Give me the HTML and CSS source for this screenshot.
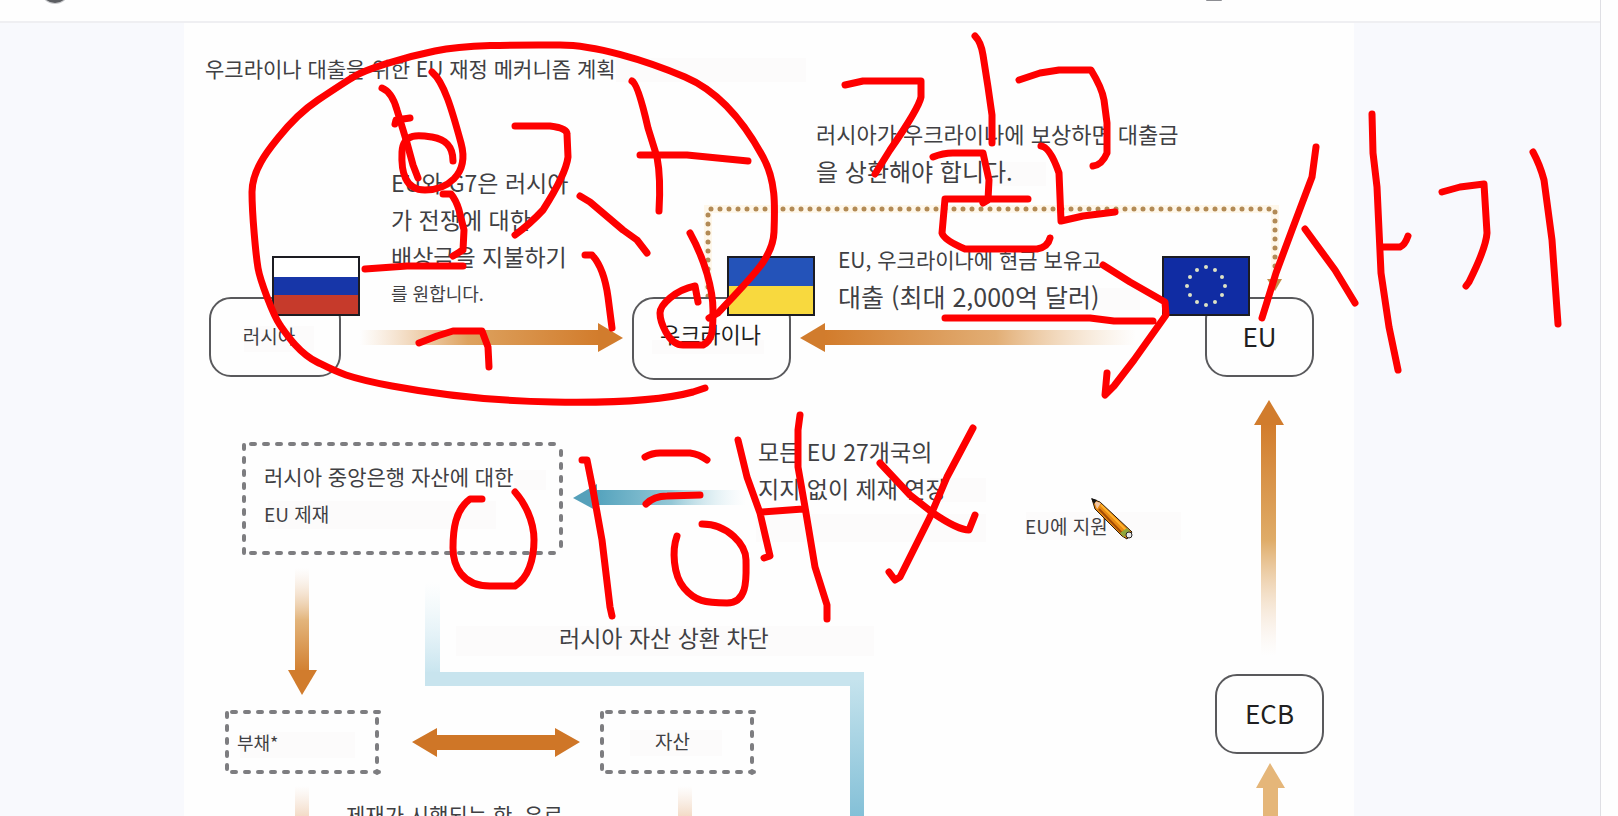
FILE: index.html
```html
<!DOCTYPE html>
<html lang="ko">
<head>
<meta charset="utf-8">
<title>우크라이나 대출을 위한 EU 재정 메커니즘 계획</title>
<link rel="stylesheet" href="styles.css">
</head>
<body>
<div class="viewer">
  <header class="topbar">
    <svg class="topbar-marks" width="1600" height="21" aria-hidden="true">
      <circle cx="55" cy="-11" r="15" fill="#c9cacd"/>
      <circle cx="55" cy="-11" r="14" fill="#5c5e62"/>
      <rect x="1206" y="-4" width="16" height="5" rx="1" fill="#8d8e93"/>
    </svg>
  </header>
  <main class="pane">
    <article class="sheet">
      <svg class="layer" width="1170" height="794" viewBox="184 22 1170 794" aria-hidden="true">
        <defs>
          <linearGradient id="right" gradientUnits="userSpaceOnUse" x1="360" y1="0" x2="600" y2="0"><stop offset="0" stop-color="#e8b783" stop-opacity="0"/><stop offset=".45" stop-color="#dda25f"/><stop offset="1" stop-color="#d27c2c"/></linearGradient>
          <linearGradient id="left" gradientUnits="userSpaceOnUse" x1="825" y1="0" x2="1136" y2="0"><stop offset="0" stop-color="#d27c2c"/><stop offset=".55" stop-color="#e2ae75"/><stop offset="1" stop-color="#f0cfa9" stop-opacity="0"/></linearGradient>
          <linearGradient id="up" gradientUnits="userSpaceOnUse" x1="0" y1="424" x2="0" y2="656"><stop offset="0" stop-color="#d27c2c"/><stop offset=".5" stop-color="#dfac68"/><stop offset="1" stop-color="#f5e0d0" stop-opacity="0"/></linearGradient>
          <linearGradient id="down" gradientUnits="userSpaceOnUse" x1="0" y1="568" x2="0" y2="672"><stop offset="0" stop-color="#f3dcca" stop-opacity="0"/><stop offset=".5" stop-color="#e3b57c"/><stop offset="1" stop-color="#d27f2f"/></linearGradient>
          <linearGradient id="faint" gradientUnits="userSpaceOnUse" x1="0" y1="786" x2="0" y2="824"><stop offset="0" stop-color="#f3dcca" stop-opacity="0"/><stop offset="1" stop-color="#f0d0b4"/></linearGradient>
          <linearGradient id="cyan" gradientUnits="userSpaceOnUse" x1="597" y1="0" x2="746" y2="0"><stop offset="0" stop-color="#55a3bd"/><stop offset=".5" stop-color="#93c7d6"/><stop offset="1" stop-color="#d9edf3" stop-opacity="0"/></linearGradient>
          <linearGradient id="pipe-in" gradientUnits="userSpaceOnUse" x1="0" y1="582" x2="0" y2="672"><stop offset="0" stop-color="#dff0f7" stop-opacity="0"/><stop offset="1" stop-color="#c9e5ef"/></linearGradient>
          <linearGradient id="pipe-out" gradientUnits="userSpaceOnUse" x1="0" y1="680" x2="0" y2="816"><stop offset="0" stop-color="#c5e3ed"/><stop offset="1" stop-color="#84c0d7"/></linearGradient>
        </defs>
        <g class="tint">
          <rect x="616" y="58" width="190" height="24"/><rect x="268" y="501" width="228" height="28"/><rect x="514" y="470" width="32" height="20"/>
          <rect x="456" y="626" width="418" height="30"/><rect x="756" y="514" width="230" height="28"/><rect x="930" y="478" width="56" height="24"/>
          <rect x="1026" y="512" width="155" height="28"/><rect x="240" y="732" width="115" height="26"/><rect x="630" y="730" width="92" height="26"/>
          <rect x="990" y="162" width="56" height="24"/><rect x="1096" y="288" width="44" height="22"/><rect x="244" y="326" width="70" height="26"/><rect x="652" y="340" width="112" height="14"/>
        </g>
        <path fill="url(#right)" d="M360 330H598V345H360z"/><path class="gold" d="M598 323 623 338 598 352z"/>
        <path fill="url(#left)" d="M825 330H1136V345H825z"/><path class="gold" d="M825 323 800 338 825 352z"/>
        <path fill="url(#up)" d="M1261 424H1276V656H1261z"/><path class="gold" d="M1254 425 1269 400 1284 425z"/>
        <path fill="url(#down)" d="M295 568H309V671H295z"/><path class="gold" d="M288 670H317L302 695z"/>
        <path fill="#e5b679" d="M1263 816V788H1256L1270 763 1285 788H1278V816z"/>
        <path fill="#cf7627" d="M412 742 437 728V735H555V728L580 742 555 757V750H437V757z"/>
        <path fill="url(#faint)" d="M295 786H309V816H295zM678 786H692V816H678z"/>
        <path fill="url(#cyan)" d="M597 490H746V505H597z"/><path fill="#55a0ba" d="M573 498 597 484V511z"/>
        <path fill="url(#pipe-in)" d="M425 582H440V672H425z"/><path fill="#c8e4ee" d="M425 672H864V686H425z"/><path fill="url(#pipe-out)" d="M850 680H864V816H850z"/>
        <g class="dots-halo"><path d="M708 290V209H1275V284"/></g>
        <g class="dots"><path d="M708 296V209H1275V284"/></g>
        <path fill="#c58b45" d="M1267 279H1282L1275 291z"/>
        <g class="dashes"><path d="M251 444H562M251 553H562M244 445V554M561 451V554"/><path d="M232 712H379M232 772H379M227 713V773M377 719V773"/><path d="M607 712H754M607 772H754M602 713V773M752 719V773"/></g>
      </svg>

      <h1 class="text title">우크라이나 대출을 위한 EU 재정 메커니즘 계획</h1>

      <section class="node russia t19">러시아</section>
      <section class="node ukraine t22 strong">우크라이나</section>
      <section class="node eu t26 strong">EU</section>
      <section class="node ecb t26 strong">ECB</section>

      <div class="flag flag-ru"><i></i><i></i><i></i></div>
      <div class="flag flag-ua"><i></i><i></i></div>
      <svg class="flag flag-eu" viewBox="-42 -28 84 56" role="img" aria-label="EU">
        <g fill="#dfe3c4"><circle cx="0" cy="-19" r="2"/><circle cx="9" cy="-16" r="2"/><circle cx="16" cy="-9" r="2"/><circle cx="19" cy="0" r="2"/><circle cx="16" cy="9" r="2"/><circle cx="9" cy="16" r="2"/><circle cx="0" cy="19" r="2"/><circle cx="-9" cy="16" r="2"/><circle cx="-16" cy="9" r="2"/><circle cx="-19" cy="0" r="2"/><circle cx="-16" cy="-9" r="2"/><circle cx="-9" cy="-16" r="2"/></g>
      </svg>

      <div class="text reparation"><p class="t23">EU와 G7은 러시아</p><p class="t23">가 전쟁에 대한</p><p class="t23">배상금을 지불하기</p><p class="t18">를 원합니다.</p></div>
      <div class="text repay"><p class="t22">러시아가 우크라이나에 보상하면 대출금</p><p class="t24">을 상환해야 합니다.</p></div>
      <div class="text loan"><p class="t21">EU, 우크라이나에 현금 보유고</p><p class="t25">대출 (최대 2,000억 달러)</p></div>
      <div class="text sanction"><p class="t21">러시아 중앙은행 자산에 대한</p><p class="t19">EU 제재</p></div>
      <div class="text extend"><p class="t23">모든 EU 27개국의</p><p class="t23">지지 없이 제재 연장</p></div>
      <p class="text support t19">EU에 지원</p>
      <p class="text block-assets t23">러시아 자산 상환 차단</p>
      <p class="text debt t18">부채*</p>
      <p class="text asset t19">자산</p>
      <p class="text until t21">제재가 시행되는 한, 유로</p>
    </article>
  </main>
</div>

<svg class="ink" width="1618" height="816" viewBox="0 0 1618 816" aria-hidden="true">
  <g class="pen">
    <path d="M705 388 693 392C660 401 610 403 553 402S440 395 392 386S335 371 317 362S287 335 280 325S260 280 258 268S252 215 252 192S270 148 278 138S300 112 318 100S345 82 355 76S400 58 435 51S525 45 560 45S645 60 685 77S750 133 763 157S775 205 774 232S750 278 718 313L709 318"/>
    <path d="M382 88Q392 92 397 110L407 143 413 165 418 178M395 124 396 120 410 118"/>
    <path d="M432 72C444 82 452 110 461 143S445 190 425 190S401 172 402 152S420 135 432 137S453 145 453 161"/>
    <path d="M443 194H451Q456 200 459 210L464 230 463 250 453 256M365 269 407 266 463 266"/>
    <path d="M515 126H550Q567 128 567 134L568 157Q566 174 543 210Q530 224 515 235M580 196 590 202 623 230 637 240 647 253"/>
    <path d="M632 81Q638 84 648 128L657 157Q661 178 659 211M640 155H687L748 161"/>
    <path d="M585 255H592Q604 268 608 297L612 328"/>
    <path d="M698 302 695 286C675 290 660 305 660 313S668 345 683 345H703C713 340 713 330 713 310S705 260 690 233"/>
    <path d="M419 343 437 336 453 331H482L488 347 489 367"/>
    <path d="M845 85 863 81H921V97Q919 108 890 150L875 174M975 36Q981 42 983 55L988 87 992 115V143"/>
    <path d="M933 157Q943 153 953 153H983L989 180 988 200 983 203M1028 199H945L942 233Q944 240 965 249H1037Q1048 247 1050 238"/>
    <path d="M1019 80 1040 73 1059 70H1091Q1102 88 1104 100L1107 123V153Q1102 165 1093 166M1041 146Q1050 147 1059 173L1061 221 1083 216 1115 212"/>
    <path d="M945 318H1090L1114 321H1153M1103 265 1130 282 1165 302 1166 315 1134 360 1114 386 1105 395 1107 373"/>
    <path d="M1316 147 1312 177 1292 230 1276 273 1262 318M1305 229 1335 270 1355 303"/>
    <path d="M1372 114 1373 153 1377 187 1381 273 1389 327 1398 370M1383 247H1400Q1405 245 1408 236"/>
    <path d="M1442 192 1460 187 1484 184 1487 233Q1486 248 1469 282L1466 286M1533 152Q1540 165 1544 180L1552 240 1558 324"/>
    <path d="M482 499H470C455 510 453 530 453 548S462 586 490 586H515C528 578 534 560 534 540S524 502 515 492"/>
    <path d="M582 460H587L593 490 602 540 610 607 612 616"/>
    <path d="M645 457Q652 453 660 453H690Q699 454 707 460M646 504Q654 496 667 496L700 495"/>
    <path d="M677 536C672 550 673 575 684 588S705 603 727 603S746 575 746 560S728 524 702 524"/>
    <path d="M738 440 747 477 760 513 770 556 764 558M762 512 803 509M800 415 798 430 798 467 805 507 815 567 827 605 827 619"/>
    <path d="M973 428 947 477 930 517 900 577 895 580 889 572M880 463 910 495 933 513Q958 530 969 530L975 515"/>
  </g>
  <g class="pencil">
    <path fill="#e88a12" stroke="#2b1a08" d="M1092 499 1100 502 1132 532 1127 539 1122 536 1095 509z"/>
    <path fill="none" stroke="#a34c06" stroke-width="2" d="M1099 509 1122 533"/>
    <path fill="none" stroke="#ffb22e" stroke-width="2" d="M1101 505 1126 530"/>
    <path fill="#f2c7a4" d="M1094 501 1101 503 1097 509z"/>
    <path fill="#111" d="M1091 498 1097 500 1094 504z"/>
    <path fill="#8fa63c" d="M1127 528 1130 531 1124 537 1120 533z"/>
    <circle cx="1129" cy="535" r="3" fill="#e8e8e8" stroke="#222"/>
  </g>
</svg>
</body>
</html>
```
FILE: styles.css
```css
* { box-sizing: border-box; }

body {
  margin: 0;
  height: 100vh;
  overflow: hidden;
  position: relative;
  background: #fefefe;
  color: #404043;
  font-family: "Noto Sans CJK KR", "Noto Sans", sans-serif;
}

p, h1 { margin: 0; font-weight: 400; }

.viewer {
  display: flex;
  flex-direction: column;
  height: 100%;
  margin-right: 17px;
  border-right: 1px solid #dfdfe4;
}

.topbar {
  height: 23px;
  flex: none;
  border-bottom: 2px solid #efeff2;
  overflow: hidden;
}

.topbar-marks { display: block; }

.pane {
  flex: 1;
  min-height: 0;
  display: grid;
  grid-template-columns: 184px minmax(0, 1170px) 1fr;
  background: #f8f9fd;
}

.sheet {
  grid-column: 2;
  position: relative;
  overflow: hidden;
  background: #fefefe;
}

.layer { position: absolute; left: 0; top: -1px; }
.tint { fill: #fcfbfb; }
.gold { fill: #d17c2d; }
.dots, .dots-halo, .dashes { fill: none; }
.dots { stroke: #b28a55; stroke-width: 5; stroke-linecap: round; stroke-dasharray: 0 9; }
.dots-halo { stroke: #fef7ea; stroke-width: 8; }
.dashes { stroke: #7d7d80; stroke-width: 4; stroke-linecap: round; stroke-dasharray: 4 9; }

.text { position: absolute; line-height: 37px; white-space: nowrap; }
.strong { color: #1f1f21; }
.t18 { font-size: 18px; }
.t19 { font-size: 19px; }
.t21, .title { font-size: 21px; }
.t22 { font-size: 22px; }
.t23 { font-size: 23px; }
.t24 { font-size: 24px; }
.t25 { font-size: 25px; }
.t26 { font-size: 26px; }

.title { left: 21px; top: 27px; }
.reparation { left: 207px; top: 141px; }
.repay { left: 632px; top: 92px; }
.loan { left: 654px; top: 218px; }
.sanction { left: 80px; top: 435px; }
.extend { left: 574px; top: 410px; }
.support { left: 841px; top: 484px; }
.block-assets { left: 375px; top: 596px; }
.debt { left: 53px; top: 701px; }
.asset { left: 471px; top: 699px; }
.until { left: 162px; top: 773px; }

.node {
  position: absolute;
  display: flex;
  align-items: center;
  justify-content: center;
  height: 80px;
  border: 2px solid #59595c;
  border-radius: 22px;
  line-height: 37px;
}

.russia { left: 25px; top: 274px; width: 132px; padding: 0 12px 4px 0; }
.ukraine { left: 448px; top: 274px; width: 159px; height: 83px; padding: 0 2px 10px 0; }
.eu { left: 1021px; top: 274px; width: 109px; padding-bottom: 4px; }
.ecb { left: 1031px; top: 651px; width: 109px; padding-bottom: 4px; }

.flag {
  position: absolute;
  top: 233px;
  width: 88px;
  height: 60px;
  display: flex;
  flex-direction: column;
  border: 2px solid #1c1c22;
}

.flag i { flex: 1; }
.flag-ru { left: 88px; background: #ffffff; }
.flag-ru i:nth-child(2) { background: #1736a8; }
.flag-ru i:nth-child(3) { background: #c63a2b; }
.flag-ua { left: 543px; }
.flag-ua i:first-child { background: #2453b9; }
.flag-ua i:last-child { background: #f8d93e; }
.flag-eu { left: 978px; background: #102ca3; }

.ink { position: absolute; left: 0; top: 0; pointer-events: none; }
.pen { fill: none; stroke: #fe0000; stroke-width: 7; stroke-linecap: round; stroke-linejoin: round; }
```
